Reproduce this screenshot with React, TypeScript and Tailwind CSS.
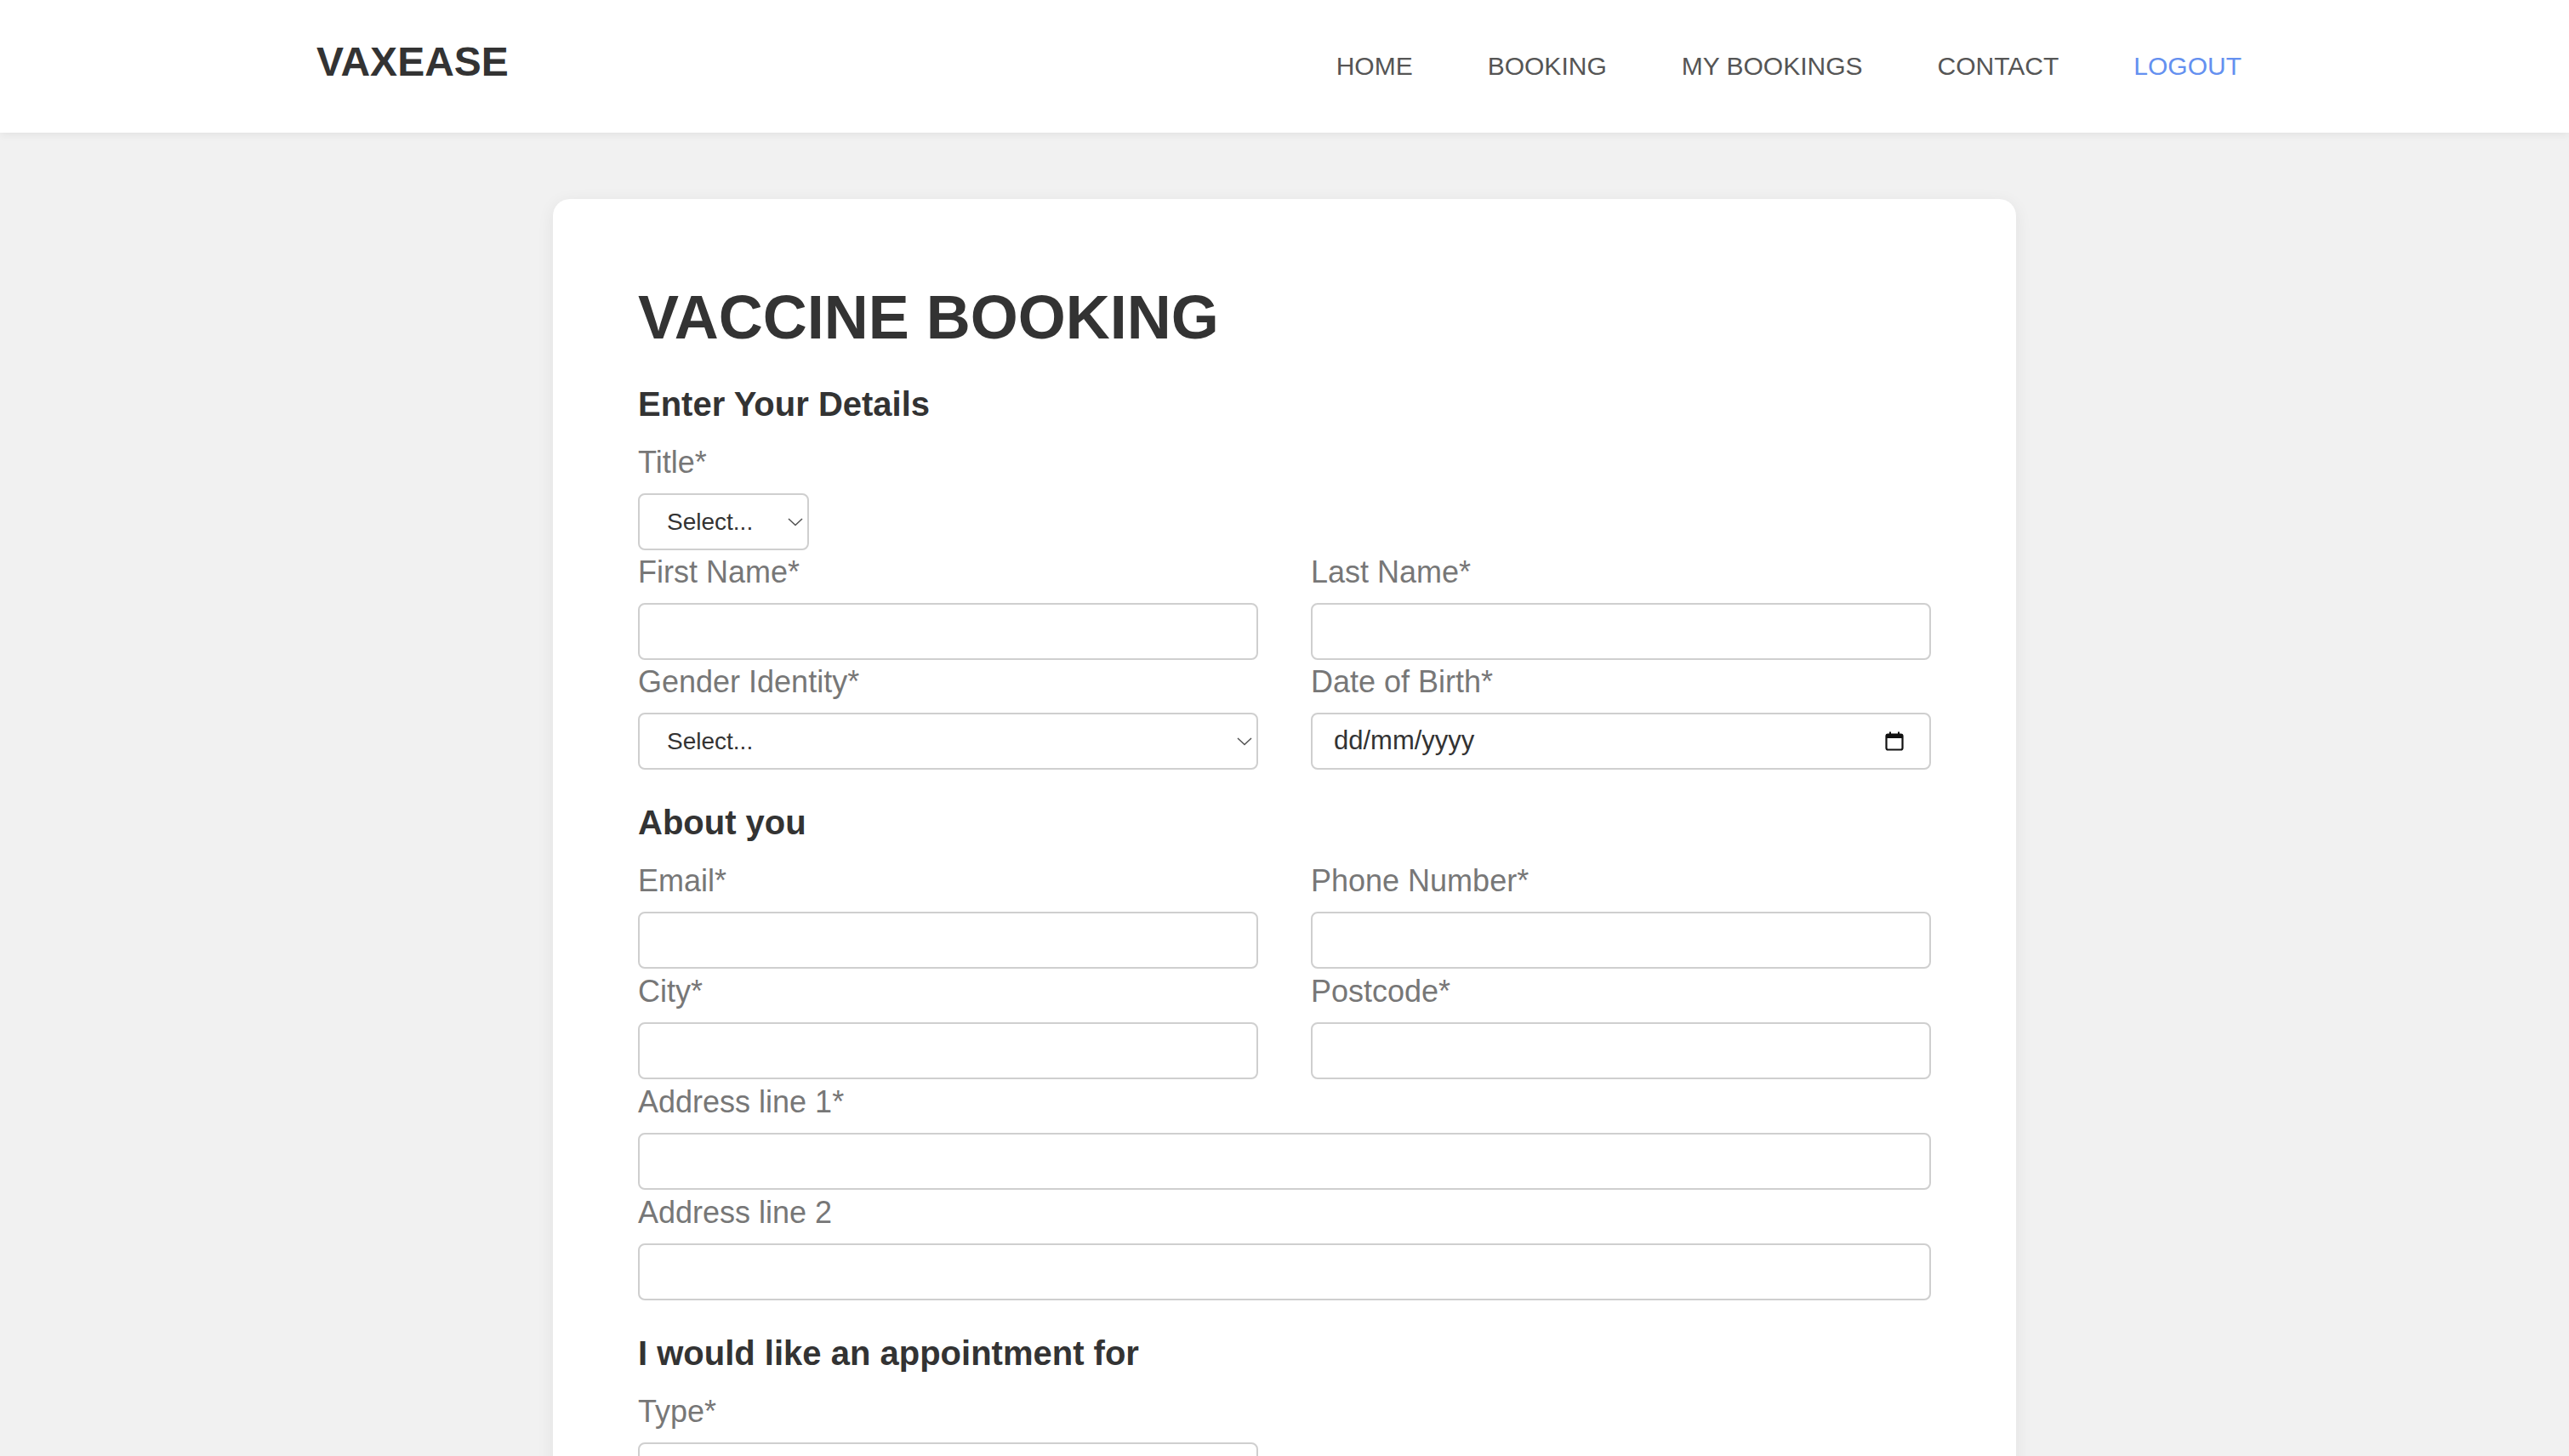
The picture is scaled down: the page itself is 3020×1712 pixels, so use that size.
import React from "react";

const NAV = ["HOME", "BOOKING", "MY BOOKINGS", "CONTACT"];

const FONT = "font-['Liberation_Sans',Arial,sans-serif]";

function Chevron() {
  return (
    <svg
      width="18"
      height="10"
      viewBox="0 0 18 10"
      className="absolute right-[7px] top-1/2 -translate-y-1/2 pointer-events-none"
    >
      <path d="M1 1 L9 8.5 L17 1" fill="none" stroke="#555" strokeWidth="1.6" />
    </svg>
  );
}

function Label({ children }: { children: React.ReactNode }) {
  return (
    <label className="block text-[36px] leading-[42px] text-[#777] mb-[15px]">
      {children}
    </label>
  );
}

function TextField({ label }: { label: string }) {
  return (
    <div className="flex flex-col">
      <Label>{label}</Label>
      <input
        type="text"
        className="h-[67px] w-full rounded-[8px] border-2 border-[#cfcfcf] bg-white px-[26px] text-[28px] text-[#333] outline-none"
      />
    </div>
  );
}

function SelectField({ label, width }: { label: string; width?: string }) {
  return (
    <div className="flex flex-col">
      <Label>{label}</Label>
      <div className={`relative ${width ?? "w-full"}`}>
        <select
          defaultValue=""
          className="h-[67px] w-full appearance-none rounded-[8px] border-2 border-[#cfcfcf] bg-white pl-[32px] pr-[30px] text-[28px] text-[#333] outline-none"
        >
          <option value="">Select...</option>
        </select>
        <Chevron />
      </div>
    </div>
  );
}

function DateField({ label }: { label: string }) {
  return (
    <div className="flex flex-col">
      <Label>{label}</Label>
      <div className="flex h-[67px] w-full items-center justify-between rounded-[8px] border-2 border-[#cfcfcf] bg-white pl-[25px] pr-[30px]">
        <span className="text-[31px] text-[#333]">dd/mm/yyyy</span>
        <svg width="22" height="23" viewBox="0 0 22 23">
          <rect x="1.5" y="3.5" width="19" height="18" rx="2" fill="none" stroke="#111" strokeWidth="2.2" />
          <rect x="1.5" y="3.5" width="19" height="4.5" fill="#111" />
          <path d="M6 0.5 V4 M16 0.5 V4" stroke="#111" strokeWidth="2" />
        </svg>
      </div>
    </div>
  );
}

function SectionTitle({ children, className }: { children: React.ReactNode; className: string }) {
  return (
    <h3 className={`text-[40px] leading-[45px] font-bold text-[#333] ${className}`}>{children}</h3>
  );
}

export default function App() {
  return (
    <div className={`min-h-screen bg-[#f1f1f1] ${FONT}`}>
      {/* Header */}
      <header className="relative z-10 flex h-[156px] items-center justify-between bg-white pl-[372px] pr-[385px] shadow-[0_2px_10px_rgba(0,0,0,0.07)]">
        <div className="mb-[10px] text-[48px] font-bold leading-none text-[#333]">VAXEASE</div>
        <nav className="flex items-center gap-[88px] text-[30px] leading-none">
          {NAV.map((item) => (
            <a key={item} className="text-[#555]">
              {item}
            </a>
          ))}
          <a className="text-[#6490f0]">LOGOUT</a>
        </nav>
      </header>

      {/* Card */}
      <main className="flex justify-center pt-[78px]">
        <div className="w-[1720px] rounded-[20px] bg-white px-[100px] pt-[100px] pb-[200px] shadow-[0_4px_20px_rgba(0,0,0,0.07)]">
          <h1 className="text-[72px] leading-[78px] font-bold text-[#333]">VACCINE BOOKING</h1>

          <SectionTitle className="mt-[41px]">Enter Your Details</SectionTitle>
          <div className="mt-[25px] flex flex-col gap-y-[5px]">
            <SelectField label="Title*" width="w-[201px]" />
            <div className="grid grid-cols-2 gap-x-[62px] gap-y-[5px]">
              <TextField label="First Name*" />
              <TextField label="Last Name*" />
              <SelectField label="Gender Identity*" />
              <DateField label="Date of Birth*" />
            </div>
          </div>

          <SectionTitle className="mt-[40px]">About you</SectionTitle>
          <div className="mt-[25px] grid grid-cols-2 gap-x-[62px] gap-y-[6px]">
            <TextField label="Email*" />
            <TextField label="Phone Number*" />
            <TextField label="City*" />
            <TextField label="Postcode*" />
            <div className="col-span-2">
              <TextField label="Address line 1*" />
            </div>
            <div className="col-span-2">
              <TextField label="Address line 2" />
            </div>
          </div>

          <SectionTitle className="mt-[40px]">I would like an appointment for</SectionTitle>
          <div className="mt-[25px] grid grid-cols-2 gap-x-[62px]">
            <SelectField label="Type*" />
          </div>
        </div>
      </main>
    </div>
  );
}
